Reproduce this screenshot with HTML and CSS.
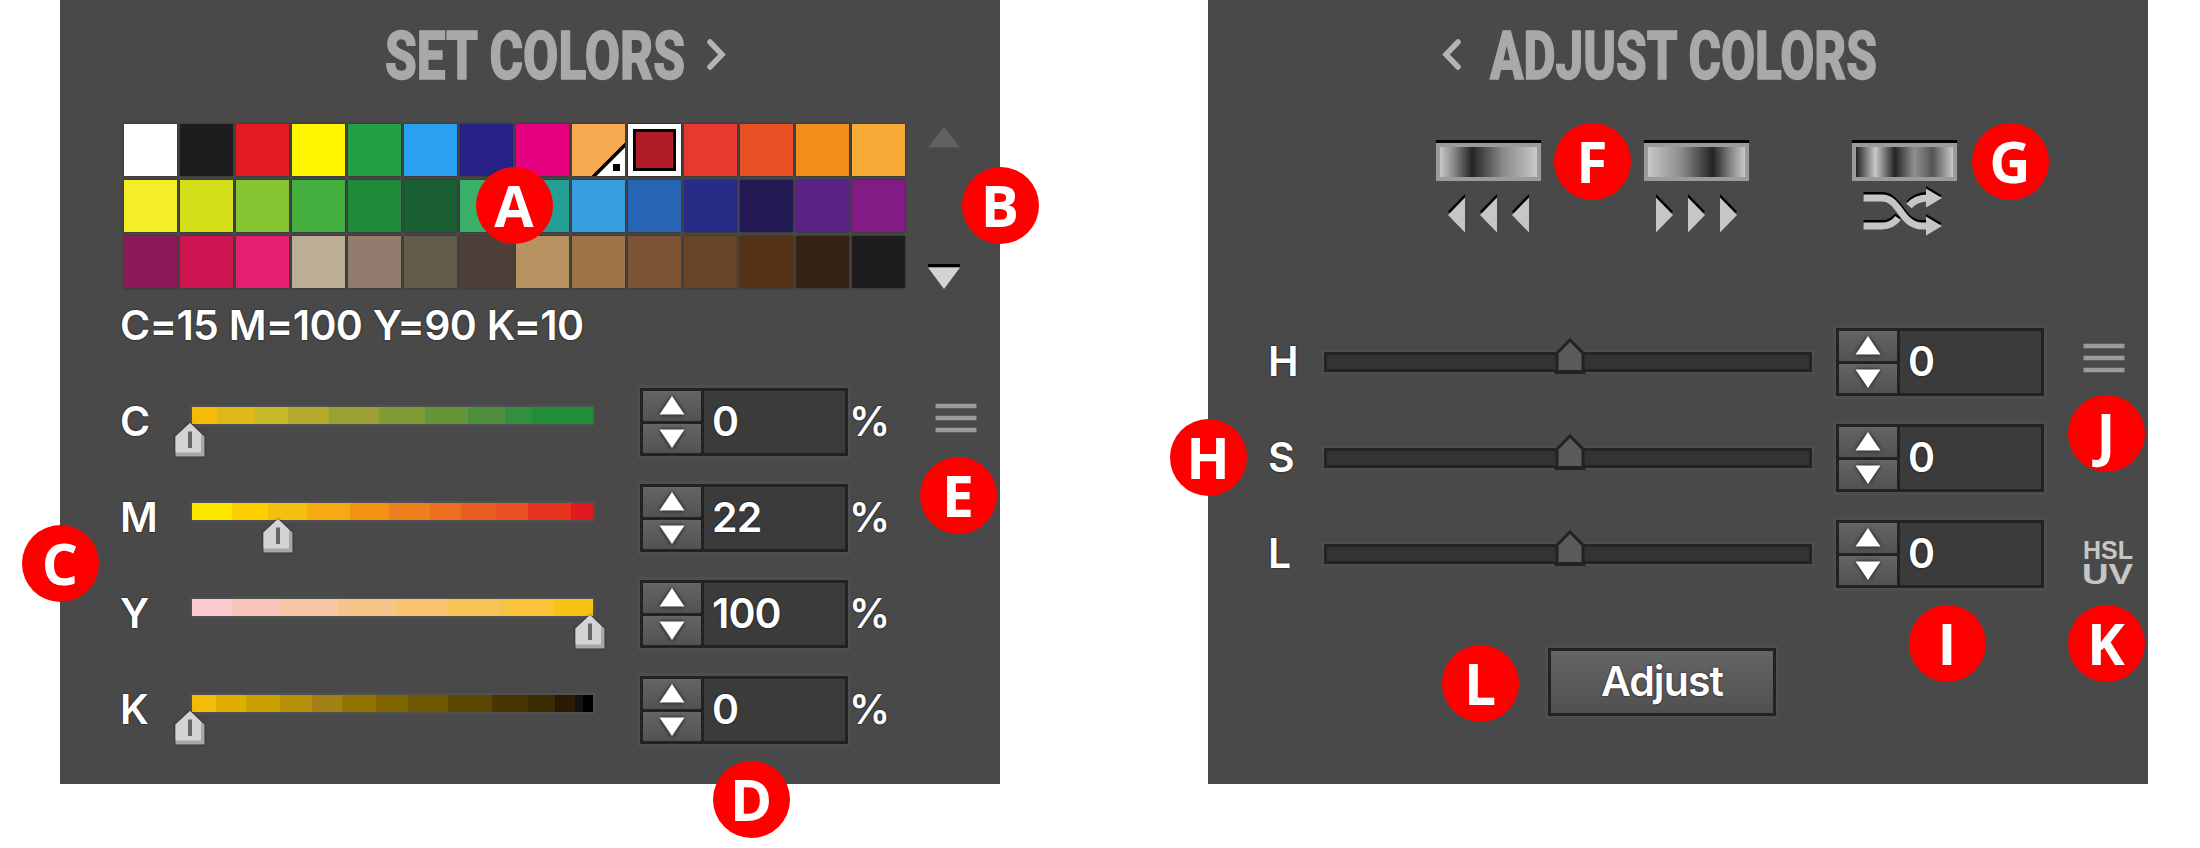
FILE: index.html
```
<!DOCTYPE html>
<html lang="en">

<head>
  <meta charset="UTF-8">
  <meta name="viewport" content="width=device-width, initial-scale=1.0">
  <title>Set Colors / Adjust Colors</title>
  <link rel="stylesheet" href="styles.css">
</head>

<body>

  <!-- Shared icons -->
  <svg class="icon-defs" width="0" height="0">
    <defs>
      <symbol id="spin-up" viewBox="0 0 26 19"><path d="M13 0L25.5 18.5H0.5z" /></symbol>
      <symbol id="spin-down" viewBox="0 0 26 19"><path d="M0.5 0.5H25.5L13 19z" /></symbol>
      <symbol id="thumb" viewBox="0 0 30 34">
        <path d="M15 0L29.5 13.500V33.500H0.500V13.500z" fill="#a6a6a6" />
        <path d="M15 0L26 11V29.500H0.500V13.500z" fill="#d4d4d4" />
        <path d="M15 8.500V25" stroke="#666" stroke-width="4" />
      </symbol>
      <symbol id="thumb-dark" viewBox="0 0 32 36">
        <path d="M16 2L29 15V33.500H3V15z" fill="#5a5a5a" stroke="#222" stroke-width="3" />
        <path d="M0.500 34.500H31.500" stroke="#222" stroke-width="3" />
      </symbol>
      <symbol id="menu" viewBox="0 0 42 30">
        <path d="M0.500 3H41.500M0.500 15H41.500M0.500 27H41.500" stroke="#9b9b9b" stroke-width="4.500" />
      </symbol>
    </defs>
  </svg>

  <div class="stage">

    <!-- Set Colors -->
    <section class="panel">
      <header class="title">
        <svg width="940" height="110">
          <text x="325" y="79" textLength="300" lengthAdjust="spacingAndGlyphs">SET COLORS</text>
          <path d="M650 42L662 54.500L650 67" />
        </svg>
      </header>

      <div class="swatch-area">
        <div class="swatches" id="swatches"></div>
        <div class="scroll">
          <svg width="34" height="22"><path d="M17 0L33 20.500H1z" fill="#616161" /></svg>
          <svg width="34" height="26"><path d="M1 2.500H33" stroke="#000" stroke-width="3" /><path d="M1 4.500H33L17 26z" fill="#d4d4d4" /></svg>
        </div>
      </div>

      <p class="readout">C=15 M=100 Y=90 K=10</p>

      <div class="rows">
        <div class="row">
          <span class="label">C</span>
          <div class="ramp ramp-c"><svg class="thumb at-start"><use href="#thumb" /></svg></div>
          <div class="spin">
            <div class="buttons"><i><svg><use href="#spin-up" /></svg></i><i><svg><use href="#spin-down" /></svg></i></div>
            <span class="value">0</span>
          </div>
          <span class="unit">%</span>
          <svg class="menu"><use href="#menu" /></svg>
        </div>
        <div class="row">
          <span class="label">M</span>
          <div class="ramp ramp-m"><svg class="thumb at-22"><use href="#thumb" /></svg></div>
          <div class="spin">
            <div class="buttons"><i><svg><use href="#spin-up" /></svg></i><i><svg><use href="#spin-down" /></svg></i></div>
            <span class="value">22</span>
          </div>
          <span class="unit">%</span>
        </div>
        <div class="row">
          <span class="label">Y</span>
          <div class="ramp ramp-y"><svg class="thumb at-end"><use href="#thumb" /></svg></div>
          <div class="spin">
            <div class="buttons"><i><svg><use href="#spin-up" /></svg></i><i><svg><use href="#spin-down" /></svg></i></div>
            <span class="value">100</span>
          </div>
          <span class="unit">%</span>
        </div>
        <div class="row">
          <span class="label">K</span>
          <div class="ramp ramp-k"><svg class="thumb at-start"><use href="#thumb" /></svg></div>
          <div class="spin">
            <div class="buttons"><i><svg><use href="#spin-up" /></svg></i><i><svg><use href="#spin-down" /></svg></i></div>
            <span class="value">0</span>
          </div>
          <span class="unit">%</span>
        </div>
      </div>
    </section>

    <!-- Adjust Colors -->
    <section class="panel">
      <header class="title">
        <svg width="940" height="110">
          <path d="M250 42L238 54.500L250 67" />
          <text x="282" y="79" textLength="387" lengthAdjust="spacingAndGlyphs">ADJUST COLORS</text>
        </svg>
      </header>

      <div class="tools">
        <div class="tool">
          <div class="strip strip-left"></div>
          <svg width="105" height="52">
            <g fill="#000" transform="translate(0 -3.500)"><path d="M12 34L29 16.500V51.500zM44 34L61 16.500V51.500zM76 34L93 16.500V51.500z" /></g>
            <g fill="#c6c6c6"><path d="M12 34L29 16.500V51.500zM44 34L61 16.500V51.500zM76 34L93 16.500V51.500z" /></g>
          </svg>
        </div>
        <div class="tool">
          <div class="strip strip-right"></div>
          <svg width="105" height="52">
            <g fill="#000" transform="translate(0 -3.500)"><path d="M12 16.500L29 34L12 51.500zM44 16.500L61 34L44 51.500zM76 16.500L93 34L76 51.500z" /></g>
            <g fill="#c6c6c6"><path d="M12 16.500L29 34L12 51.500zM44 16.500L61 34L44 51.500zM76 16.500L93 34L76 51.500z" /></g>
          </svg>
        </div>
        <div class="tool">
          <div class="strip strip-random"></div>
          <svg width="105" height="56">
            <defs>
              <g id="shuffle">
                <path d="M11.500 17H30C48 17 49 45 70 45H76M11.500 45H30Q40 45 46 37M57 25Q64 17 76 17" fill="none" stroke-width="7" />
                <path d="M74 7.500L90 17L74 26.500zM74 35.500L90 45L74 54.500z" stroke="none" />
              </g>
            </defs>
            <use href="#shuffle" y="-2.500" stroke="#000" fill="#000" />
            <use href="#shuffle" stroke="#c6c6c6" fill="#c6c6c6" />
          </svg>
        </div>
      </div>

      <div class="rows rows-hsl">
        <div class="row">
          <span class="label">H</span>
          <div class="track"><svg class="thumb-dark"><use href="#thumb-dark" /></svg></div>
          <div class="spin">
            <div class="buttons"><i><svg><use href="#spin-up" /></svg></i><i><svg><use href="#spin-down" /></svg></i></div>
            <span class="value">0</span>
          </div>
          <svg class="menu"><use href="#menu" /></svg>
        </div>
        <div class="row">
          <span class="label">S</span>
          <div class="track"><svg class="thumb-dark"><use href="#thumb-dark" /></svg></div>
          <div class="spin">
            <div class="buttons"><i><svg><use href="#spin-up" /></svg></i><i><svg><use href="#spin-down" /></svg></i></div>
            <span class="value">0</span>
          </div>
        </div>
        <div class="row">
          <span class="label">L</span>
          <div class="track"><svg class="thumb-dark"><use href="#thumb-dark" /></svg></div>
          <div class="spin">
            <div class="buttons"><i><svg><use href="#spin-up" /></svg></i><i><svg><use href="#spin-down" /></svg></i></div>
            <span class="value">0</span>
          </div>
          <svg class="hsluv" width="54" height="48">
            <text x="1" y="19" font-size="25" textLength="50" lengthAdjust="spacingAndGlyphs">HSL</text>
            <text x="0" y="43.500" font-size="29" textLength="51" lengthAdjust="spacingAndGlyphs">UV</text>
          </svg>
        </div>
      </div>

      <button class="adjust">Adjust</button>
    </section>

    <!-- Callouts -->
    <span class="badge badge-a">A</span>
    <span class="badge badge-b">B</span>
    <span class="badge badge-c">C</span>
    <span class="badge badge-d">D</span>
    <span class="badge badge-e">E</span>
    <span class="badge badge-f">F</span>
    <span class="badge badge-g">G</span>
    <span class="badge badge-h">H</span>
    <span class="badge badge-i">I</span>
    <span class="badge badge-j">J</span>
    <span class="badge badge-k">K</span>
    <span class="badge badge-l">L</span>
  </div>

  <script>
    const colors = [
      '#ffffff', '#1f1c1d', '#e21b22', '#fff600', '#259f46', '#2aa1f0', '#292286', '#e4007f', '#f7a94f', '#b01c25', '#e63a31', '#e95124', '#f18d1a', '#f6aa38',
      '#f5ee27', '#d3df18', '#86c433', '#42af3f', '#208c3b', '#1a5f31', '#38b068', '#249f95', '#379fe1', '#2766b4', '#292c86', '#231a55', '#5a2086', '#831b84',
      '#8d1958', '#cd1552', '#e61e70', '#bbae92', '#917c6e', '#655c4b', '#4e4038', '#b99262', '#9d7347', '#7d5435', '#674425', '#533113', '#342116', '#1f1c1d'
    ];
    const swatches = document.getElementById('swatches');

    colors.forEach((color, i) => {
      const swatch = document.createElement('div');
      swatch.className = 'swatch';
      swatch.style.backgroundColor = color;
      if (i === 8) {
        // spot colour corner
        swatch.innerHTML = '<svg width="53" height="52"><path d="M53 20V52H21z" fill="#fff"/><path d="M54 20L21 53" stroke="#000" stroke-width="3.500"/><path d="M41 40h7v7h-7z"/></svg>';
      }
      if (i === 9) {
        swatch.classList.add('selected');
      }
      swatches.appendChild(swatch);
    });
  </script>

</body>

</html>
```
FILE: styles.css
```
/* Reset styles */
* {
  margin: 0;
  padding: 0;
  box-sizing: border-box;
}

body {
  background: #fff;
  font-family: Inter, "Liberation Sans", sans-serif;
}

svg {
  display: block;
}

.icon-defs {
  position: absolute;
}

.stage {
  position: relative;
  display: flex;
  gap: 208px;
  width: 2200px;
  height: 848px;
  padding-left: 60px;
  overflow: hidden;
}

.panel {
  width: 940px;
  height: 784px;
  background: #494949;
  color: #fff;
}

/* Panel titles */
.title {
  height: 124px;
}

.title text {
  font-family: Roboto, "Liberation Sans", sans-serif;
  font-size: 67px;
  font-weight: 800;
  fill: #a9a9a9;
  stroke: #a9a9a9;
  stroke-width: 1.5;
}

.title path {
  fill: none;
  stroke: #b4b4b4;
  stroke-width: 5.5;
  stroke-linecap: round;
}

/* Swatches */
.swatch-area {
  display: flex;
  gap: 22px;
  height: 166px;
  padding-left: 64px;
}

.swatches {
  display: grid;
  grid-template-columns: repeat(14, 53px);
  grid-auto-rows: 52px;
  gap: 4px 3px;
}

.swatch {
  box-shadow: 0 0 2px rgba(0, 0, 0, 0.5);
}

.selected {
  border: 5px solid #fff;
  box-shadow: inset 0 0 0 3px #000, 0 0 2px #000;
}

.scroll {
  display: flex;
  flex-direction: column;
  justify-content: space-between;
  padding: 3px 0 1px;
}

.readout,
.label,
.value,
.unit,
.adjust {
  font-size: 41px;
  font-weight: 600;
  line-height: 48px;
  letter-spacing: -0.9px;
  white-space: nowrap;
  text-shadow: 0 0 2px rgba(0, 0, 0, 0.9);
}

.readout {
  height: 84px;
  padding: 11px 0 0 60px;
  letter-spacing: -0.7px;
  word-spacing: 1px;
}

/* Slider rows */
.row {
  display: flex;
  align-items: center;
  height: 96px;
  padding-left: 60px;
}

.label {
  width: 72px;
  margin-bottom: 2px;
}

.ramp {
  position: relative;
  width: 401px;
  height: 17px;
  margin: 0 47px 13px 0;
  box-shadow: 0 0 0 2px #505050;
}

.ramp-c {
  background: linear-gradient(90deg, #f5bb09 25px, #dfb81a 25px 63px, #c9b926 63px 96px, #b4ab2b 96px 137px, #9aa132 137px 187px, #7f9c37 187px 233px, #669438 233px 276px, #4d8f3c 276px 313px, #328e41 313px 340px, #208d3b 340px);
}

.ramp-m {
  background: linear-gradient(90deg, #fde500 40px, #fad000 40px 76px, #f5bf10 76px 115px, #f5a912 115px 158px, #f49316 158px 197px, #ee7f1c 197px 238px, #eb6f1e 238px 269px, #e95f20 269px 304px, #e84f22 304px 336px, #e53520 336px 379px, #e31920 379px);
}

.ramp-y {
  background: linear-gradient(90deg, #fbcbd0 40px, #f7c3bb 40px 88px, #f7c7a5 88px 146px, #f8c588 146px 204px, #f9c471 204px 256px, #f9c357 256px 309px, #f9c33a 309px 362px, #f8c214 362px);
}

.ramp-k {
  background: linear-gradient(90deg, #f4bb08 24px, #e0ad00 24px 54px, #c99f00 54px 88px, #b58f0a 88px 120px, #a38013 120px 150px, #937400 150px 184px, #816600 184px 216px, #6e5800 216px 256px, #5a4700 256px 300px, #473600 300px 336px, #3a2b00 336px 363px, #2c1a04 363px 383px, #1a1210 383px 391px, #000 391px);
}

.thumb {
  position: absolute;
  top: 16px;
  width: 30px;
  height: 34px;
  filter: drop-shadow(0 0 1px #222);
}

.at-start {
  left: -17px;
}

.at-22 {
  left: 71px;
}

.at-end {
  left: 383px;
}

.track {
  position: relative;
  width: 488px;
  height: 20px;
  margin-right: 24px;
  background: #333;
  border: 3px solid #242424;
  box-shadow: 0 0 0 2px #4f4f4f;
}

.thumb-dark {
  position: absolute;
  left: 227px;
  top: -17px;
  width: 32px;
  height: 36px;
}

/* Number fields */
.spin {
  display: flex;
  width: 208px;
  height: 68px;
  background: #3b3b3b;
  border: 3px solid #222;
  box-shadow: 0 0 0 3px #4e4e4e;
}

.buttons {
  display: flex;
  flex-direction: column;
  gap: 3px;
  width: 61px;
  border-right: 3px solid #222;
  background: #222;
}

.buttons i {
  display: flex;
  flex: 1;
  align-items: center;
  justify-content: center;
  background: linear-gradient(#656565, #525252);
}

.buttons svg {
  width: 26px;
  height: 19px;
  fill: #fff;
  filter: drop-shadow(0 0 2px rgba(0, 0, 0, 0.8));
}

.value {
  padding: 6px 0 0 8px;
}

.unit {
  width: 84px;
  margin-bottom: 2px;
  padding-left: 1px;
}

.menu {
  width: 42px;
  height: 30px;
  margin: 0 0 9px 3px;
}

/* Gradient tools */
.tools {
  display: flex;
  gap: 103px;
  height: 190px;
  padding: 19px 0 0 228px;
}

.tool {
  width: 105px;
}

.strip {
  height: 38px;
  border: 4px solid #9b9b9b;
  box-shadow: 0 -3px #000;
}

.strip-left {
  background: linear-gradient(90deg, #c8c8c8, #858585 15%, #242424 33%, #8a8a8a 65%, #c8c8c8);
}

.strip-right {
  background: linear-gradient(90deg, #c8c8c8, #8a8a8a 35%, #242424 67%, #858585 85%, #c8c8c8);
}

.strip-random {
  background: linear-gradient(90deg, #242424, #c8c8c8 20%, #242424 40%, #909090 60%, #555 79%, #c8c8c8);
}

.rows-hsl .label {
  width: 56px;
}

.rows-hsl .menu {
  margin: 0 0 9px 39px;
}

.hsluv {
  margin: 0 0 -20px 38px;
  overflow: visible;
}

.hsluv text {
  font-family: "Liberation Sans", sans-serif;
  font-weight: 700;
  fill: #c6c6c6;
}

.adjust {
  display: block;
  width: 228px;
  height: 68px;
  margin: 46px 0 0 340px;
  padding-bottom: 2px;
  color: #fff;
  font-family: inherit;
  background: linear-gradient(#656565, #505050);
  border: 3px solid #222;
  box-shadow: 0 0 0 3px #4e4e4e;
}

/* Callout badges */
.badge {
  position: absolute;
  width: 77px;
  height: 77px;
  margin: -38.5px 0 0 -38.5px;
  border-radius: 50%;
  background: #f00;
  color: #fff;
  font: 700 57px/77px "Open Sans", sans-serif;
  text-align: center;
}

.badge-a { left: 514px; top: 205.5px; }
.badge-b { left: 1000px; top: 205.5px; }
.badge-c { left: 60px; top: 563.5px; }
.badge-d { left: 751px; top: 799.5px; }
.badge-e { left: 958px; top: 495.5px; }
.badge-f { left: 1592px; top: 161.5px; }
.badge-g { left: 2010px; top: 161.5px; }
.badge-h { left: 1208px; top: 457.5px; }
.badge-i { left: 1947px; top: 643.5px; }
.badge-j { left: 2106px; top: 433.5px; }
.badge-k { left: 2106px; top: 643.5px; }
.badge-l { left: 1480px; top: 683.5px; }
```
